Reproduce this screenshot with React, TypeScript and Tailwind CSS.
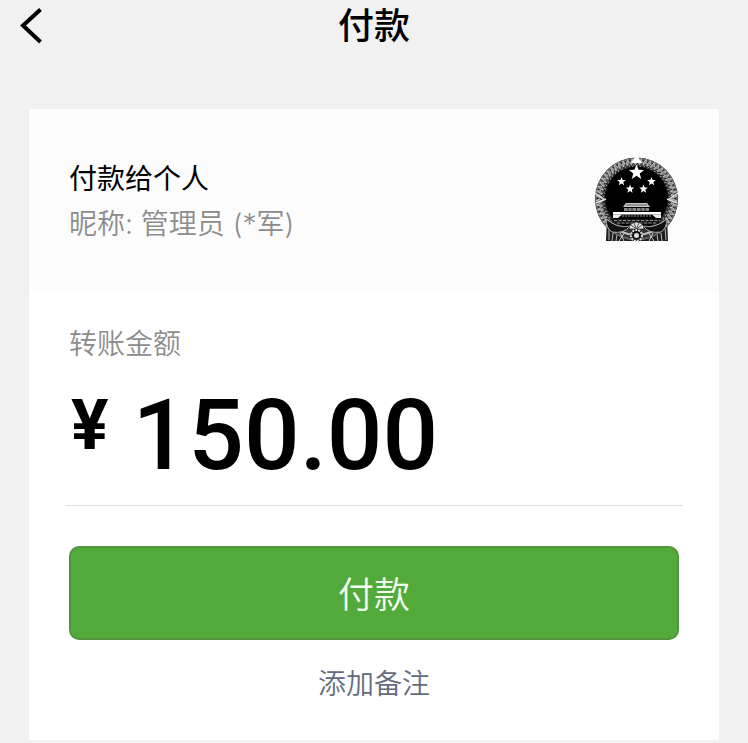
const STAR = "0,-10 2.6,-3.3 9.5,-3.1 4,1.4 5.9,8.1 0,4.2 -5.9,8.1 -4,1.4 -9.5,-3.1 -2.6,-3.3";

function Star({ x, y, size }: { x: number; y: number; size: number }) {
  return <polygon points={STAR} fill="#fff" transform={`translate(${x} ${y}) scale(${size / 10})`} />;
}

function Emblem() {
  const grains = Array.from({ length: 44 }, (_, i) => 128 + i * 6.6);
  return (
    <svg viewBox="0 0 85 85" className="size-[85px] shrink-0" role="img" aria-label="头像">
      {/* drapery below the wreath */}
      <path d="M13 60 L12 84 L74 84 L73 60 Z" fill="#1c1c1c" />
      <path
        d="M15 70 L15 83 M19 76 L18 84 M23 77 L22 84 M67 76 L68 84 M71 70 L72 83 M63 77 L64 84"
        stroke="#bbb"
        strokeWidth="1"
      />
      {/* wreath of wheat ears */}
      <circle cx="42.500" cy="42" r="41.500" fill="#333" />
      <circle cx="42.500" cy="42" r="40.500" fill="none" stroke="#666" strokeWidth="1.500" />
      <circle cx="42.500" cy="42" r="36" fill="none" stroke="#b8b8b8" strokeWidth="2" />
      {grains.map((deg, i) => (
        <g key={i} transform={`rotate(${deg} 42.500 42)`}>
          <path d="M75 40 Q79 37 83 40 Q79 43 75 40" fill="#888" stroke="#d0d0d0" strokeWidth=".7" />
          <path d="M74 38 L79 42" stroke="#222" strokeWidth="1" />
        </g>
      ))}
      <circle cx="42.500" cy="41" r="31.500" fill="#000" />
      <path d="M37 6 L41 0 H44 L48 6 Z" fill="#fff" />
      <path d="M1 36 L11 43 M2 46 L12 42 M84 36 L74 43 M83 46 L73 42" stroke="#ddd" strokeWidth="1.500" />
      <Star x={42.5} y={15.5} size={8} />
      <Star x={27.5} y={24.5} size={4.5} />
      <Star x={57.5} y={24.5} size={4.5} />
      <Star x={36} y={32} size={4.5} />
      <Star x={49.5} y={32} size={4.5} />
      {/* gate tower */}
      <path d="M32 46 H53 L56 50 H29 Z" fill="#c5c5c5" />
      <path d="M32 48 H53" stroke="#444" strokeWidth=".8" />
      <path d="M30 51 H55 V54 H30 Z" fill="#888" />
      <path d="M34 51 V54 M38 51 V54 M42.500 51 V54 M47 51 V54 M51 51 V54" stroke="#222" />
      <path d="M19 55 H67 V57.500 H19 Z" fill="#fff" />
      <path d="M19 57.500 H28 L24 61 H19 Z M67 57.500 H58 L62 61 H67 Z" fill="#eee" />
      <path d="M28 59 H58" stroke="#999" strokeDasharray="2 1" />
      <path d="M17 62 H68 L65 67 H20 Z" fill="#1a1a1a" />
      <path d="M20 63.500 H66 M23 66 H62" stroke="#aaa" strokeWidth=".8" strokeDasharray="3 1.500" />
      {/* ribbons and cog wheel */}
      <path d="M12 62 Q24 72 36 69 Q30 77 18 75 Q12 71 12 62 Z" fill="#111" stroke="#ccc" strokeWidth=".8" />
      <path d="M73 62 Q61 72 49 69 Q55 77 67 75 Q73 71 73 62 Z" fill="#111" stroke="#ccc" strokeWidth=".8" />
      <path d="M26 76 L30 84 M31 75 L25 84 M59 76 L55 84 M54 75 L60 84" stroke="#ccc" strokeWidth="1" />
      <path d="M35 72 Q35 66 42.500 65 Q50 66 50 72 Z" fill="#ddd" stroke="#111" strokeWidth=".6" />
      <path d="M42.500 72 L37 68 M42.500 72 L40 66 M42.500 72 L45 66 M42.500 72 L48 68" stroke="#333" strokeWidth=".8" />
      <circle cx="42.500" cy="78.500" r="5.500" fill="#111" stroke="#ddd" strokeWidth="2" strokeDasharray="2 1" />
      <circle cx="42.500" cy="78.500" r="2.500" fill="#ddd" />
    </svg>
  );
}

export default function App() {
  return (
    <div className="min-h-screen bg-[#f1f1f1] pb-0.5 font-['Inter','Noto_Sans_CJK_SC',sans-serif] text-black">
      <header className="grid h-[109px] grid-cols-[1fr_auto_1fr] items-start px-5">
        <button type="button" aria-label="返回" className="mt-2 w-6">
          <svg viewBox="0 0 24 36" className="h-9 w-6" fill="none" stroke="#000" strokeWidth="4">
            <path d="M20.500 1.500 L3 17.500 L20.500 34" />
          </svg>
        </button>
        <h1 className="text-4xl leading-[52px] font-medium">付款</h1>
      </header>

      <main className="mx-[29px] bg-white">
        <section className="flex h-[183px] items-start justify-between bg-[#fcfcfc] px-10 pt-12">
          <div className="text-[28px] leading-[45px]">
            <h2>付款给个人</h2>
            <p className="font-[350] text-[#8c8c8c]">昵称: 管理员 (*军)</p>
          </div>
          <Emblem />
        </section>

        <section className="px-9 pt-7">
          <h2 className="px-1 text-[28px] leading-[48px] font-[350] text-[#8c8c8c]">转账金额</h2>
          <p className="flex h-[138px] items-start gap-6 border-b border-[#e0e0e0] px-1.5 pt-3 font-['Roboto',sans-serif]">
            <span className="text-[70px] leading-[90px] font-bold">¥</span>
            <span className="text-[98px] leading-[112px] font-medium">150.00</span>
          </p>
        </section>

        <div className="flex flex-col items-center px-10 pt-10 pb-8">
          <button
            type="button"
            className="h-[94px] w-full rounded-[10px] border-2 border-[#55943f] bg-[#52aa3b] pt-1 text-[36px] font-[350] text-[#f4fff0]"
          >
            付款
          </button>
          <button type="button" className="mt-5 text-[28px] leading-[48px] font-[350] text-[#646b7c]">
            添加备注
          </button>
        </div>
      </main>
    </div>
  );
}
